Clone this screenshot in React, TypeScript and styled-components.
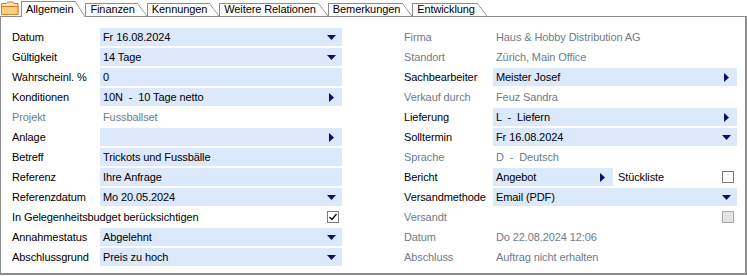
import React from "react";
import styled, { createGlobalStyle, css } from "styled-components";

const GlobalStyle = createGlobalStyle`
  html, body { margin: 0; padding: 0; background: #fff; }
  body {
    font-family: "Liberation Sans", Arial, sans-serif;
    font-size: 11px;
    letter-spacing: -0.1px;
    color: #000;
  }
`;

type Kind = "down" | "right";

type RowDef =
	| { type: "field"; label: string; value: string; arrow?: Kind }
	| { type: "static"; label: string; value: string }
	| { type: "check"; label: string; checked: boolean; disabled?: boolean }
	| { type: "report"; label: string; value: string; extra: string };

const leftRows: RowDef[] = [
	{ type: "field", label: "Datum", value: "Fr 16.08.2024", arrow: "down" },
	{ type: "field", label: "Gültigkeit", value: "14 Tage", arrow: "down" },
	{ type: "field", label: "Wahrscheinl. %", value: "0" },
	{ type: "field", label: "Konditionen", value: "10N  -  10 Tage netto", arrow: "right" },
	{ type: "static", label: "Projekt", value: "Fussballset" },
	{ type: "field", label: "Anlage", value: "", arrow: "right" },
	{ type: "field", label: "Betreff", value: "Trickots und Fussbälle" },
	{ type: "field", label: "Referenz", value: "Ihre Anfrage" },
	{ type: "field", label: "Referenzdatum", value: "Mo 20.05.2024", arrow: "down" },
	{ type: "check", label: "In Gelegenheitsbudget berücksichtigen", checked: true },
	{ type: "field", label: "Annahmestatus", value: "Abgelehnt", arrow: "down" },
	{ type: "field", label: "Abschlussgrund", value: "Preis zu hoch", arrow: "down" },
];

const rightRows: RowDef[] = [
	{ type: "static", label: "Firma", value: "Haus & Hobby Distribution AG" },
	{ type: "static", label: "Standort", value: "Zürich, Main Office" },
	{ type: "field", label: "Sachbearbeiter", value: "Meister Josef", arrow: "right" },
	{ type: "static", label: "Verkauf durch", value: "Feuz Sandra" },
	{ type: "field", label: "Lieferung", value: "L  -  Liefern", arrow: "right" },
	{ type: "field", label: "Solltermin", value: "Fr 16.08.2024", arrow: "down" },
	{ type: "static", label: "Sprache", value: "D  -  Deutsch" },
	{ type: "report", label: "Bericht", value: "Angebot", extra: "Stückliste" },
	{ type: "field", label: "Versandmethode", value: "Email (PDF)", arrow: "down" },
	{ type: "check", label: "Versandt", checked: false, disabled: true },
	{ type: "static", label: "Datum", value: "Do 22.08.2024 12:06" },
	{ type: "static", label: "Abschluss", value: "Auftrag nicht erhalten" },
];

const tabs = ["Allgemein", "Finanzen", "Kennungen", "Weitere Relationen", "Bemerkungen", "Entwicklung"];

export default function App() {
	return (
		<>
			<GlobalStyle />
			<Window>
				{/* SECTION Tabs */}
				<TabBar>
					<FolderSlot>
						<FolderIcon />
					</FolderSlot>
					{tabs.map((name, i) => (
						<Tab key={name} $active={i === 0}>
							{name}
						</Tab>
					))}
				</TabBar>

				{/* SECTION Form */}
				<Panel>
					<Column $width={330} $labelWidth={88}>
						{leftRows.map((row, i) => (
							<FormRow key={i} row={row} />
						))}
					</Column>
					<Column $width={333} $labelWidth={89}>
						{rightRows.map((row, i) => (
							<FormRow key={i} row={row} />
						))}
					</Column>
				</Panel>
			</Window>
		</>
	);
}

function FormRow({ row }: { row: RowDef }) {
	if (row.type === "check") {
		return (
			<CheckRow>
				<Label $muted={row.disabled}>{row.label}</Label>
				<CheckBox checked={row.checked} disabled={row.disabled} />
			</CheckRow>
		);
	}
	if (row.type === "static") {
		return (
			<Row>
				<Label $muted>{row.label}</Label>
				<StaticValue>{row.value}</StaticValue>
			</Row>
		);
	}
	if (row.type === "report") {
		return (
			<Row>
				<Label>{row.label}</Label>
				<Inline>
					<Field $width={120} $arrow="right">
						<span>{row.value}</span>
						<Arrow kind="right" />
					</Field>
					<ExtraLabel>{row.extra}</ExtraLabel>
					<CheckBox checked={false} />
				</Inline>
			</Row>
		);
	}
	return (
		<Row>
			<Label>{row.label}</Label>
			<Field $arrow={row.arrow}>
				<span>{row.value}</span>
				{row.arrow && <Arrow kind={row.arrow} />}
			</Field>
		</Row>
	);
}

function Arrow({ kind }: { kind: Kind }) {
	if (kind === "down") {
		return (
			<svg width="9" height="5" viewBox="0 0 9 5">
				<polygon points="0,0 9,0 4.5,5" fill="#0d0d6b" />
			</svg>
		);
	}
	return (
		<svg width="5" height="9" viewBox="0 0 5 9">
			<polygon points="0,0 5,4.5 0,9" fill="#0d0d6b" />
		</svg>
	);
}

function CheckBox({ checked, disabled }: { checked: boolean; disabled?: boolean }) {
	return (
		<Box $disabled={disabled}>
			{checked && (
				<svg width="10" height="10" viewBox="0 0 10 10">
					<polyline points="1.5,5 4,7.5 8.5,2" fill="none" stroke="#000" strokeWidth="1.3" />
				</svg>
			)}
		</Box>
	);
}

function FolderIcon() {
	return (
		<svg width="19" height="15" viewBox="0 0 19 15">
			<path d="M1.5 2.5 h5 l1.5 -1.5 h5 l1 1.5 h4 v11 h-16.5 z" fill="#fbe2ae" stroke="#e07a23" />
			<path d="M1.5 5.5 h16.5 v8 h-16.5 z" fill="#f6d183" stroke="#e07a23" />
		</svg>
	);
}

const Window = styled.div`
	width: 747px;
	height: 276px;
	display: flex;
	flex-direction: column;
	box-sizing: border-box;
	padding-bottom: 1px;
`;

const TabBar = styled.div`
	display: flex;
	align-items: flex-end;
	height: 16px;
	position: relative;
	z-index: 1;
`;

const FolderSlot = styled.div`
	width: 21px;
	height: 16px;
	display: flex;
	align-items: flex-start;
	padding-top: 1px;
	box-sizing: border-box;
`;

const Tab = styled.div<{ $active?: boolean }>`
	position: relative;
	display: flex;
	align-items: center;
	box-sizing: border-box;
	padding: 0 12px 0 4px;
	height: ${(p) => (p.$active ? "16px" : "13px")};
	margin-bottom: ${(p) => (p.$active ? "-1px" : "0")};
	border-left: 1px solid #8c8c8c;
	line-height: 1;
	color: #000;

	&::before {
		content: "";
		position: absolute;
		left: 0;
		top: 0;
		bottom: 0;
		right: 10px;
		border-top: 1px solid #8c8c8c;
		background: #fff;
		z-index: -1;
	}

	&::after {
		content: "";
		position: absolute;
		top: 0;
		right: 0;
		bottom: 0;
		width: 10px;
		background: linear-gradient(
			to top right,
			#fff calc(50% - 0.7px),
			#8c8c8c 50%,
			transparent calc(50% + 0.7px)
		);
		z-index: -1;
	}
`;

const Panel = styled.div`
	flex: 1;
	display: flex;
	gap: 62px;
	padding: 11px 0 0 11px;
	border: 1px solid #8c8c8c;
	border-right-width: 2px;
	border-bottom-width: 2px;
	background: #fff;
`;

const Column = styled.div<{ $width: number; $labelWidth: number }>`
	width: ${(p) => p.$width}px;
	display: flex;
	flex-direction: column;
	gap: 2px;
	--label-width: ${(p) => p.$labelWidth}px;
`;

const Row = styled.div`
	display: grid;
	grid-template-columns: var(--label-width) 1fr;
	align-items: center;
	height: 18px;
`;

const CheckRow = styled.div`
	display: flex;
	align-items: center;
	justify-content: space-between;
	height: 18px;
	padding-right: 3px;
`;

const Label = styled.span<{ $muted?: boolean }>`
	white-space: nowrap;
	color: ${(p) => (p.$muted ? "#6e7b8a" : "#000")};
`;

const StaticValue = styled.span`
	padding-left: 3px;
	color: #6e7b8a;
	white-space: pre;
`;

const Field = styled.div<{ $width?: number; $arrow?: Kind }>`
	display: flex;
	align-items: center;
	justify-content: space-between;
	height: 18px;
	box-sizing: border-box;
	padding-left: 3px;
	padding-right: ${(p) => (p.$arrow === "right" ? "8px" : "6px")};
	background: #dce8fc;
	white-space: pre;
	${(p) =>
		p.$width &&
		css`
			width: ${p.$width}px;
		`}
`;

const Inline = styled.div`
	display: flex;
	align-items: center;
	padding-right: 3px;
`;

const ExtraLabel = styled.span`
	flex: 1;
	padding-left: 5px;
`;

const Box = styled.div<{ $disabled?: boolean }>`
	width: 12px;
	height: 12px;
	box-sizing: border-box;
	display: flex;
	align-items: center;
	justify-content: center;
	border: 1px solid ${(p) => (p.$disabled ? "#a6a6a6" : "#7a7a7a")};
	background: ${(p) => (p.$disabled ? "#e3e3e3" : "#fff")};
`;
